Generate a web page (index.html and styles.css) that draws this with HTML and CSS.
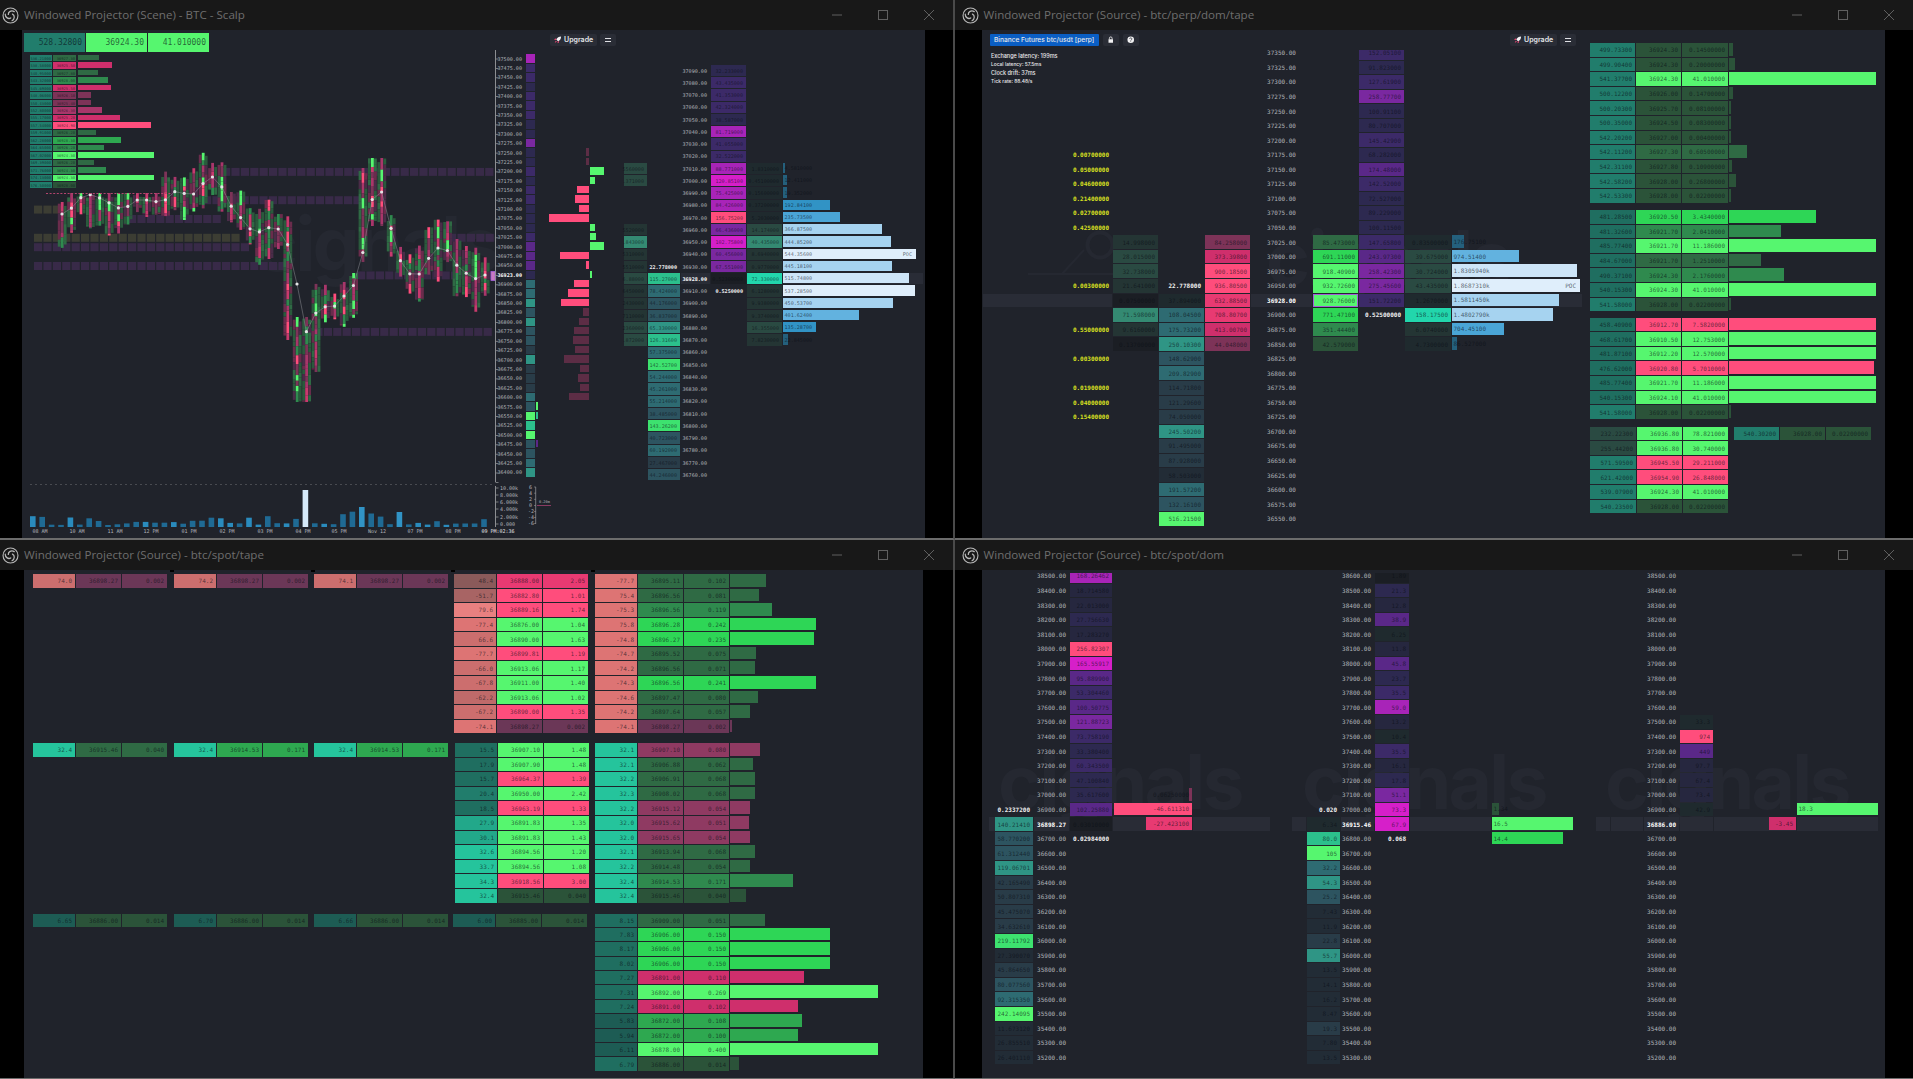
FILE: index.html
```html
<!DOCTYPE html>
<html lang="en">
<head>
<meta charset="utf-8">
<title>Windowed Projectors</title>
<link rel="stylesheet" href="styles.css">
</head>
<body>
<svg class="defs" width="0" height="0" aria-hidden="true">
  <symbol id="obs" viewBox="-10 -10 20 20">
    <circle r="8.8" fill="none" stroke="currentColor" stroke-width="1.3"/>
    <g fill="none" stroke="currentColor" stroke-width="1.5" stroke-linecap="round">
      <path id="blade" d="M-2.6 -1.2C-2.8 -4.4 1 -6.6 4.4 -4.6"/>
      <path d="M-2.6 -1.2C-2.8 -4.4 1 -6.6 4.4 -4.6" transform="rotate(120)"/>
      <path d="M-2.6 -1.2C-2.8 -4.4 1 -6.6 4.4 -4.6" transform="rotate(240)"/>
    </g>
  </symbol>
  <symbol id="ctl-min" viewBox="0 0 10 10"><path d="M0 5H10" stroke="currentColor" stroke-width="1"/></symbol>
  <symbol id="ctl-max" viewBox="0 0 10 10"><rect x=".5" y=".5" width="9" height="9" fill="none" stroke="currentColor" stroke-width="1"/></symbol>
  <symbol id="ctl-close" viewBox="0 0 10 10"><path d="M0 0L10 10M10 0L0 10" stroke="currentColor" stroke-width="1"/></symbol>
  <symbol id="rocket" viewBox="0 0 10 10"><path d="M9.5 .5C6.5 .6 4.4 2 3 4.6L5.4 7C8 5.6 9.4 3.5 9.5 .5Z" fill="#f4f4f6"/><path d="M3.2 3.2L1 3.8 .5 5.2 2.8 5ZM6.8 6.8L6.2 9 4.8 9.5 5 7.2ZM2.4 6.2L3.8 7.6 1 9Z" fill="#ff4d7c"/></symbol>
  <symbol id="lock" viewBox="0 0 10 10"><path d="M2 4.4H8V9H2Z" fill="#f0f0f2"/><path d="M3.2 4.4V3A1.8 1.8 0 0 1 6.8 3V4.4" fill="none" stroke="#f0f0f2" stroke-width="1.1"/></symbol>
  <symbol id="help" viewBox="0 0 10 10"><circle cx="5" cy="5" r="4.4" fill="#f0f0f2"/><path d="M3.5 3.9A1.5 1.4 0 1 1 5.6 5.2C5.1 5.5 5 5.7 5 6.2" fill="none" stroke="#2a2d36" stroke-width="1"/><circle cx="5" cy="7.5" r=".6" fill="#2a2d36"/></symbol>
</svg>
<main class="desk">
  <section class="win win-tl">
    <header class="titlebar">
      <svg class="obs"><use href="#obs"/></svg>
      <span class="title">Windowed Projector (Scene) - BTC - Scalp</span>
      <div class="ctls"><svg><use href="#ctl-min"/></svg><svg><use href="#ctl-max"/></svg><svg><use href="#ctl-close"/></svg></div>
    </header>
    <div class="well well-a">
      <div class="canvas" id="c1">
        <span class="mark mark-1">cignals</span>
        <div class="tools tools-1">
          <button class="btn"><svg class="ic"><use href="#rocket"/></svg>Upgrade</button>
          <button class="btn btn-sq"><span class="burger"></span></button>
        </div>
      </div>
    </div>
  </section>
  <section class="win win-tr">
    <header class="titlebar">
      <svg class="obs"><use href="#obs"/></svg>
      <span class="title">Windowed Projector (Source) - btc/perp/dom/tape</span>
      <div class="ctls"><svg><use href="#ctl-min"/></svg><svg><use href="#ctl-max"/></svg><svg><use href="#ctl-close"/></svg></div>
    </header>
    <div class="well well-b">
      <div class="canvas" id="c2">
        <svg class="person" viewBox="0 0 100 60"><circle cx="72" cy="15" r="12.5"/><path d="M34 44L56 20M0 44H92"/></svg>
        <span class="mark mark-2">cignals</span>
        <div class="tools tools-2">
          <button class="btn btn-blue">Binance Futures btc/usdt [perp]</button>
          <button class="btn btn-sq"><svg class="ic"><use href="#lock"/></svg></button>
          <button class="btn btn-sq"><svg class="ic"><use href="#help"/></svg></button>
        </div>
        <div class="tools tools-3">
          <button class="btn"><svg class="ic"><use href="#rocket"/></svg>Upgrade</button>
          <button class="btn btn-sq"><span class="burger"></span></button>
        </div>
        <div class="info">
          <p class="big">Exchange latency: 199ms</p>
          <p>Local latency: 57.5ms</p>
          <p class="big">Clock drift: 37ms</p>
          <p>Tick rate: 88.48/s</p>
        </div>
      </div>
    </div>
  </section>
  <section class="win win-bl">
    <header class="titlebar">
      <svg class="obs"><use href="#obs"/></svg>
      <span class="title">Windowed Projector (Source) - btc/spot/tape</span>
      <div class="ctls"><svg><use href="#ctl-min"/></svg><svg><use href="#ctl-max"/></svg><svg><use href="#ctl-close"/></svg></div>
    </header>
    <div class="well well-c"><div class="canvas" id="c3"></div></div>
  </section>
  <section class="win win-br">
    <header class="titlebar">
      <svg class="obs"><use href="#obs"/></svg>
      <span class="title">Windowed Projector (Source) - btc/spot/dom</span>
      <div class="ctls"><svg><use href="#ctl-min"/></svg><svg><use href="#ctl-max"/></svg><svg><use href="#ctl-close"/></svg></div>
    </header>
    <div class="well well-b">
      <div class="canvas" id="c4">
        <span class="mark mark-41">cignals</span>
        <span class="mark mark-42">cignals</span>
        <span class="mark mark-43">cignals</span>
      </div>
    </div>
  </section>
</main>
<script src="app.js"></script>
</body>
</html>
```
FILE: styles.css
```css
* { box-sizing: border-box; }
html, body { margin: 0; height: 100%; background: #000; overflow: hidden; }
.defs { position: absolute; }
.desk {
  width: 1913px; height: 1079px;
  display: grid;
  grid-template-columns: 955px 958px;
  grid-template-rows: 540px 539px;
}
.win { display: flex; flex-direction: column; border-bottom: 2px solid #6c6c6c; min-height: 0; }
.win-tl, .win-bl { border-right: 2px solid #4a4a4a; }
.win-bl, .win-br { border-bottom-width: 1px; }
.titlebar {
  height: 30px; flex: none; background: #181818;
  display: flex; align-items: center; color: #6a6a6a;
}
.obs { width: 17px; height: 17px; margin-left: 1.5px; color: #b8b8b8; flex: none; }
.win-tr .obs, .win-br .obs { margin-left: 6.5px; }
.title { margin-left: 5.5px; font: 11.6px/30px "Open Sans", "Noto Sans", sans-serif; color: #6e6e6e; white-space: nowrap; }
.win-tr .title, .win-br .title { margin-left: 5px; }
.ctls { margin-left: auto; display: flex; color: #5f5f5f; padding-right: 1px; }
.ctls svg { width: 46px; height: 10px; }
.well { flex: 1; background: #000; display: flex; min-height: 0; }
.well-a { padding: 0 28px 0 22px; }
.well-b { padding: 0 28px 0 27px; }
.well-c { padding: 0 30px 0 24px; }
.canvas { flex: 1; position: relative; overflow: hidden; background: #20232b; }

.mark { position: absolute; font: 700 75px/1 Inter, "Open Sans", sans-serif; letter-spacing: -3px; color: #252831; white-space: nowrap; }
.mark-1 { left: 232px; top: 176px; }
.mark-2 { left: 284px; top: 190px; }
.mark-41 { left: 16px; top: 174px; }
.mark-42 { left: 320px; top: 174px; }
.mark-43 { left: 623px; top: 174px; }
.person { position: absolute; left: 46px; top: 200px; width: 100px; height: 60px; fill: none; stroke: #252831; stroke-width: 4; }
.person path { stroke-width: 2; }

.tools { position: absolute; display: flex; gap: 3px; top: 4px; }
.tools-1 { left: 528px; }
.tools-2 { left: 8px; gap: 4px; }
.tools-3 { left: 528px; }
.btn {
  height: 12px; padding: 0 4px; border: 0; border-radius: 2px;
  background: #2a2d36; color: #e6e7ea;
  font: 600 7px/12px Inter, sans-serif;
  display: flex; align-items: center; gap: 2.5px; white-space: nowrap;
}
.btn-sq { width: 16px; padding: 0; justify-content: center; font-size: 6px; }
.btn-blue { background: #0a5ec4; width: 109px; padding: 0 4px; border-radius: 1px; font-weight: 500; font-size: 6.6px; }
.ic { width: 7.5px; height: 7.5px; }
.burger { width: 6px; height: 4px; border-top: 1px solid #dfe0e4; border-bottom: 1px solid #dfe0e4; }
.info { position: absolute; left: 9px; top: 21.5px; color: #e8e8ea; font: 500 4.9px/8.5px Inter, sans-serif; }
.info p { margin: 0; white-space: nowrap; }
.info .big { font-size: 5.5px; }

.chart { position: absolute; left: 0; top: 0; width: 903px; height: 508px; }
.ax { font: 5px "DejaVu Sans Mono", monospace; fill: #b4b6bb; }
.ax-b { fill: #e8e8e8; }
.ax-s { font-size: 3.6px; }

.ladder { position: absolute; display: grid; column-gap: 1px; font-family: "DejaVu Sans Mono", "Liberation Mono", monospace; font-size: 6px; }
.fs5 { font-size: 5.1px; }
.fs4 { font-size: 3.8px; }
.fs8 { font-size: 8px; }
.cell {
  margin-bottom: 1px; padding: 0 3px; min-width: 0;
  display: flex; align-items: center; justify-content: flex-end;
  color: rgba(10, 14, 22, .64); white-space: nowrap;
}
.fs4 .cell { padding: 0 1px; }
.barcell { padding: 0; justify-content: flex-start; align-items: flex-start; }
.barcell.end { justify-content: flex-end; }
.bar { position: relative; height: calc(100% - 1px); display: flex; align-items: center; flex: none; padding-left: 1.5px; gap: 4px; }
.end .bar { justify-content: flex-end; padding: 0 3px 0 0; }
.bar .poc { position: absolute; right: 4px; }
.pc { justify-content: center; }
.hl { background: #292c36; }
.px { color: #b1b3b9; }
.pb { color: #fff; font-weight: 700; }
.w { color: #f0f0f0; font-weight: 700; }
.y { color: #d9e021; font-weight: 700; }
.tk { position: absolute; top: 0; width: 4px; height: 2px; background: #000; }

.p0 { background: #26273f; } .p1 { background: #2d2950; } .p2 { background: #3c2a68; }
.p3 { background: #5a2888; } .p4 { background: #7a28a0; } .p5 { background: #a824b8; } .p6 { background: #d61fc9; }
.t0 { background: #222c36; } .t1 { background: #293c48; } .t2 { background: #2d5460; } .t3 { background: #2e6b72; }
.t4 { background: #2f9585; } .t5 { background: #2cc08c; } .t6 { background: #3de26f; } .t7 { background: #22d6ac; }
.g1 { background: #2b5339; } .g2 { background: #2f6a44; } .g3 { background: #2f8a4e; } .g4 { background: #2ea850; }
.g5 { background: #2ed656; } .g6 { background: #56f66f; }
.g6o { background: #56f66f; box-shadow: inset 0 0 0 1px #a060d8; }
.r1 { background: #5c2d45; } .r2 { background: #7d3358; } .r3 { background: #a8366a; } .r4 { background: #cf2f6c; }
.r5 { background: #e83a72; } .r6 { background: #ff4d7c; }
.b1 { background: #24607d; } .b2 { background: #3193c5; } .b3 { background: #4aa5d6; } .b4 { background: #62b2df; }
.b5 { background: #a6d3f0; } .b6 { background: #cde5f8; } .b7 { background: #dfeefb; }
.tt0 { background: #1d5c54; } .tt1 { background: #1f6e60; } .tt2 { background: #217d6c; } .tt25 { background: #22a88a; } .tt3 { background: #25c49c; }
.e0 { background: #1b1e24; } .e1 { background: #1f2a2e; } .e2 { background: #243534; } .e3 { background: #2a4a42; } .e4 { background: #348a72; }
.c1 { background: #8a5a5a; } .c2 { background: #a86464; } .c3 { background: #bf6a6a; } .c4 { background: #cc6e6e; } .c5 { background: #dd7474; } .c6 { background: #e88080; }
.pl1 { background: #6b3757; } .pl2 { background: #8f3a62; }
```
FILE: app.js
```js
const ORIGIN = { c1: [22, 30], c2: [982, 30], c3: [24, 570], c4: [982, 570] };

function ladder(id, o) {
  const [ox, oy] = ORIGIN[id];
  const el = document.createElement('div');
  el.className = 'ladder ' + (o.cls || '');
  el.style.left = o.x - ox + 'px';
  el.style.top = o.y - oy + 'px';
  el.style.gridTemplateColumns = o.cols.map(c => c + 'px').join(' ');
  el.style.gridAutoRows = o.rh + 'px';
  if (o.clip) el.style.clipPath = `inset(${o.clip}px 0 0 0)`;
  o.rows.forEach((row, r) => {
    o.cols.forEach((_, c) => {
      const [t = '', k = '', w = '', a = ''] = (row[c] || '').split('|');
      const cell = document.createElement('div');
      cell.className = 'cell';
      if (r === o.hl) cell.classList.add('hl');
      if (w !== '') {
        cell.classList.add('barcell');
        if (a) cell.classList.add('end');
        const bar = document.createElement('div');
        bar.className = 'bar ' + k;
        bar.style.width = w + 'px';
        const [main, poc] = t.split('~');
        if (main) { const s = document.createElement('span'); s.textContent = main; bar.append(s); }
        if (poc) { const s = document.createElement('span'); s.className = 'poc'; s.textContent = poc; bar.append(s); }
        cell.append(bar);
      } else {
        if (k) k.split(' ').forEach(n => cell.classList.add(n));
        if (t) cell.textContent = t;
      }
      el.append(cell);
    });
  });
  document.getElementById(id).append(el);
}

/* column helpers: "text|class text|class" from a starting row */
const col = (start, str) => {
  const m = {};
  str.trim().split(/\s+/).forEach((s, i) => { if (s !== '.') m[start + i] = s; });
  return m;
};
const merge = (...ms) => Object.assign({}, ...ms);
const sparse = (n, cols) => Array.from({ length: n }, (_, r) => cols.map(c => c[r] || ''));
const priceCol = (start, step, n, cls, special) => {
  const m = {};
  for (let i = 0; i < n; i++) m[i] = (start + step * i).toFixed(2) + '|' + cls;
  return Object.assign(m, special || {});
};
/* tape row: value class price size class barWidth */
const T = (s, bar = true) => {
  const [a, k1, b, c, k, w] = s.trim().split(/\s+/);
  const r = [`${a}|${k1}`, `${b}|${k}`, `${c}|${k}`];
  if (bar) r.push(`|${k}|${w}`);
  return r;
};
const tapeRows = (str, bar = true) => str.trim().split('\n').map(s => T(s, bar));

/* ---------- window 1: chart ---------- */
function buildChart() {
  let seed = 7;
  const R = () => (seed = (seed * 16807) % 2147483647) / 2147483647;
  const pick = a => a[Math.floor(R() * a.length)];
  const keys = [[62,214],[68,213],[77,200],[87,194],[96,196],[115,206],[124,211],[133,200],[152,200],[162,204],[171,193],[180,190],[190,198],[199,188],[209,177],[218,177],[228,203],[237,212],[246,226],[256,233],[265,230],[275,224],[284,238],[294,256],[303,340],[312,318],[322,305],[331,310],[340,300],[350,290],[359,278],[369,211],[378,179],[388,215],[397,255],[406,270],[416,280],[425,263],[435,250],[444,244],[454,263],[463,270],[473,280],[482,275],[492,275]];
  const yAt = x => {
    for (let i = 1; i < keys.length; i++) if (x <= keys[i][0]) {
      const [x0, y0] = keys[i - 1], [x1, y1] = keys[i];
      return y0 + (y1 - y0) * (x - x0) / (x1 - x0);
    }
    return 275;
  };
  const rect = (x, y, w, h, c) => `<rect x="${x.toFixed(1)}" y="${y.toFixed(1)}" width="${w.toFixed(1)}" height="${h.toFixed(1)}" fill="${c}"/>`;
  let h = '';
  const PU = '#382a48', OL = '#3c3d33';
  [[12,222,494,PU],[15,203,360,PU],[16,34,62,OL],[17,128,222,PU],[19,34,240,OL],[19,448,494,PU],[20,34,250,PU],[22,34,288,PU],[23,357,494,PU],[29,305,494,PU]].forEach(([i, a, b, c]) => {
    for (let x = a; x < b - 4; x += 9.4) h += rect(x, 59 + i * 9.41 - 4, 8.2, 8, c);
  });
  const side = ['#2a5a3c', '#2f6a44', '#2a5a3c', '#6a2c4c', '#4a2c48', '#2a5a3c'];
  const mid = ['#c83a6e', '#ff4d7c', '#56f66f', '#a8366a', '#2f8a4e', '#7d3358', '#a8366a'];
  const pts = [];
  for (let x = 62; x < 492; x += 9.4) {
    const y = yAt(x);
    let top = y - 12 - R() * 20, bot = y + 10 + R() * 26;
    if (x < 160) top = Math.max(top, 193);
    if (x > 296 && x < 310) { top = 317; bot = 402; }
    if (x > 285 && x < 296) bot = 340;
    if (x > 310 && x < 325) bot = 372;
    if (x > 372 && x < 384) { top = 158; bot = 226; }
    if (x > 362 && x < 372) { top = 168; bot = 262; }
    [[-4.2, side, 1], [-1.2, mid, 0], [1.8, side, 1]].forEach(([dx, pal, inset]) => {
      let yy = top + inset * R() * 6;
      const end = bot - inset * R() * 6;
      while (yy < end) {
        const seg = Math.min(4 + R() * 8, end - yy);
        h += rect(x + dx, yy, 2.8, seg, pick(pal));
        yy += seg;
      }
    });
    pts.push([x, y]);
  }
  h += `<polyline points="${pts.map(p => p.map(v => v.toFixed(1)).join(',')).join(' ')}" fill="none" stroke="#8f9196" stroke-width=".5"/>`;
  pts.forEach(([x, y]) => { h += `<circle cx="${x.toFixed(1)}" cy="${y.toFixed(1)}" r="1.6" fill="#e4e4e6"/>`; });
  for (let x = 46; x < 170; x += 3.6) h += rect(x, 193, 2, 1, '#b4446e');
  h += `<rect x="491" y="271.5" width="4" height="9" fill="#c87ac0" stroke="#a060d8" stroke-width=".8"/>`;

  /* volume bars */
  for (let i = 0, x = 30; x < 490; i++, x += 9.4) {
    let v = 2 + R() * R() * 15;
    let c = R() > .7 ? '#2a8bbd' : '#1f6a94';
    if (x > 298 && x < 308) { v = 37; c = '#d5e9f9'; }
    if (x > 355 && x < 365) { v = 20; c = '#3193c5'; }
    if (x > 390 && x < 400) { v = 15; c = '#3193c5'; }
    h += rect(x, 527 - v, 5.6, v, c);
  }
  /* axes */
  h += `<path d="M495.5 50V482M495.5 486V527" stroke="#8c8e92" stroke-width="1" fill="none"/>`;
  for (let i = 0; i < 46; i++) h += rect(495.5, 59 + i * 9.41 - .4, 3, .8, '#8c8e92');
  h += `<path d="M30 484.5H495" stroke="#5a5c60" stroke-dasharray="2 3" stroke-width=".7"/>`;
  [['10.00k', 488], ['8.000k', 495], ['6.000k', 502], ['4.000k', 509], ['2.000k', 517], ['0.000', 524]].forEach(([t, y]) => {
    h += `<text class="ax" x="500" y="${y + 2}">${t}</text>` + rect(495.5, y - .4, 3, .8, '#8c8e92');
  });
  [['08 AM', 40], ['10 AM', 77], ['11 AM', 115], ['12 PM', 151], ['01 PM', 189], ['02 PM', 227], ['03 PM', 265], ['04 PM', 303], ['05 PM', 339], ['Nov 12', 377], ['07 PM', 415], ['08 PM', 453]].forEach(([t, x]) => {
    h += `<text class="ax" text-anchor="middle" x="${x}" y="532.5">${t}</text>`;
  });
  h += `<text class="ax ax-b" text-anchor="middle" x="498" y="532.5">09 PM:02:36</text>`;
  ['6', '4', '2', '0', '-2', '-4', '-6'].forEach((t, i) => {
    h += `<text class="ax" x="${t[0] === '-' ? 528 : 529}" y="${488.5 + i * 6.1}">${t}</text>` + rect(534, 487 + i * 6.1 - .3, 2, .6, '#8c8e92');
  });
  h += `<path d="M535.7 487V524" stroke="#8c8e92" stroke-width=".8"/><path d="M537 505.5H551" stroke="#8a3a62" stroke-width="1"/>`;
  h += `<text class="ax ax-s" x="539" y="503">0.20m</text>`;

  const svg = document.createElementNS('http://www.w3.org/2000/svg', 'svg');
  svg.setAttribute('class', 'chart');
  svg.setAttribute('viewBox', '22 30 903 508');
  svg.innerHTML = h;
  const host = document.getElementById('c1');
  host.insertBefore(svg, host.querySelector('.tools'));
}
buildChart();

/* ---------- window 1: panels ---------- */
ladder('c1', { x: 24, y: 33, rh: 20, cols: [61, 61, 61], cls: 'fs8', rows: [['528.32800|tt2', '36924.30|g6', '41.010000|g6']] });

const tiny = [['g2',21,'36927.30'],['r4',34,'36925.50'],['g2',20,'36927.80'],['g3',30,'36928.00'],['r4',33,'36925.50'],['r2',13,'36926.10'],['r2',13,'36925.40'],['r3',24,'36926.30'],['r4',42,'36925.20'],['r6',73,'36924.90'],['g2',18,'36926.20'],['g4',43,'36928.30'],['g3',26,'36926.20'],['g6',76,'36924.30'],['g2',16,'36926.20'],['g3',28,'36924.30'],['g6',76,'36924.30'],['g1',0,'36928.00']];
ladder('c1', { x: 30, y: 55, rh: 7.47, cols: [22, 23, 80], cls: 'fs4',
  rows: tiny.map(([k, w, p], i) => [`${(536.21 + i * 2.37).toFixed(5)}|tt2`, `${p}|${k}`, w ? `|${k}|${w}` : '']) });

/* price axis, volume profile and delta bars */
const axisKinds = 'p5 p2 p2 p1 p2 p2 p2 p1 p1 p4 p1 p1 p2 p1 p2 p2 p1 p1 p1 p2 p3 p3 p3 p1 t3 t3 t4 t2 t4 t2 t2 t1 t4 t1 t1 t1 t3 t2 g6 t5 g6 t2 t2 t3 t4'.split(' ');
const delta = { 10: -2, 11: -.6, 12: 14, 13: 5, 14: -12, 15: -14, 16: -10, 17: -40, 18: 5, 19: 6, 20: 14, 21: -29, 22: -3, 23: 2, 24: -15, 25: -21, 26: -28, 27: -6, 28: -10, 29: -15, 30: -16, 31: -14, 32: -25, 33: -9, 34: -11, 35: -9, 36: -20 };
ladder('c1', { x: 499, y: 54.3, rh: 9.41, cols: [26, 9, 6, 46, 30], cls: 'fs5',
  rows: axisKinds.map((k, i) => {
    const v = delta[i];
    const dark = i >= 27 || i === 10 || i === 11;
    return [
      i === 23 ? '36923.00|pb' : (37500 - 25 * i).toFixed(2) + '|px',
      '|' + k,
      i === 37 ? '|g6|2' : i === 38 ? '|t5|2' : i === 41 ? '|p3|2' : '',
      v < 0 ? `|${dark ? 'r1' : 'r6'}|${-v}|e` : '',
      v > 0 ? `|g6|${v}` : ''
    ];
  }) });

const purple1 = col(0, '32.233000|p1 43.435000|p2 41.353000|p2 42.324000|p2 38.587000|p1 81.719000|p5 41.055000|p2 32.522000|p2 88.771000|p5 120.85100|p6 75.425000|p5 84.426000|p5 156.75200|r6 66.436000|p4 102.75800|p6 60.456000|p4 67.551000|p4 0.52300000|e0');
const bars1 = merge(col(8, '4.5810000|b1|2 12.411000|b1|4 19.352000|b1|4 192.84100|b2|47 235.73500|b3|57 366.87500|b5|99 444.85200|b5|108 544.35600~POC|b7|133 445.18100|b5|109 515.74800|b6|126 537.28500|b7|132 450.53700|b5|110 401.62400|b4|76 135.28700|b2|33 22.845000|b1|5'));
ladder('c1', { x: 624, y: 64.9, rh: 12.25, cols: [23, 32, 29, 35, 35, 140], cls: 'fs5', hl: 17,
  rows: sparse(34, [
    merge(col(8, '5560000|e3 .371000|e3'), col(13, '5520000|e2 .843000|e4 5310000|e2 5510000|e2 6.88000|e3 6450000|e2 2430000|e2 7110000|e2 2360000|e3 .872000|e3')),
    merge({ 16: '22.778000|w' }, col(17, '115.27000|t5 78.424000|t3 44.176000|t2 36.837000|t2 65.330000|t4 126.31600|t5 57.375000|t3 142.52700|t6 54.244000|t3 45.261000|t3 55.214000|t3 38.485000|t2 143.26200|t6 40.723000|t2 60.192000|t3 27.467000|t1 44.246000|t2')),
    priceCol(37090, -10, 34, 'px', { 17: '36928.00|pb' }),
    merge(purple1, { 18: '0.5250000|w' }),
    col(8, '1.8310000|e1 0.45100000|e1 0.15600000|e1 0.37200000|e1 5.2030000|e1 14.174000|e3 40.435000|e4 8.6940000|e2 0.9770000|e2 72.330000|t7 6.1280000|e2 9.9380000|e2 9.3740000|e2 16.355000|e3 7.8230000|e2'),
    bars1
  ]) });

/* ---------- window 2 ---------- */
const r2 = { x: 983, y: 46, rh: 14.57, clip: 4, hl: 17 };
ladder('c2', { ...r2, cols: [129, 45, 45, 45, 61, 45, 45, 46, 130],
  rows: sparse(33, [
    merge(col(7, '0.00700000|y 0.05000000|y 0.04600000|y 0.21400000|y 0.02700000|y 0.42500000|y'), { 16: '0.00300000|y', 19: '0.55000000|y', 21: '0.00300000|y', 23: '0.01900000|y', 24: '0.04000000|y', 25: '0.15400000|y' }),
    col(13, '14.998000|e2 28.015000|e3 32.738000|e3 21.641000|e2 0.07500000|e0 71.598000|e4 9.6160000|e2 0.13700000|e0'),
    merge({ 16: '22.778000|w' }, col(17, '37.894000|e1 108.04500|t3 175.73200|t3 250.10300|t4 148.62900|t2 209.82900|t3 114.71800|t1 121.29600|t1 74.050000|t1 245.50200|t4 91.495000|t1 87.928000|t1 58.503000|t0 191.57200|t3 132.16100|t2 516.21500|g6 302.32500|t4')),
    col(13, '84.258000|r2 373.39800|r4 900.18500|r6 936.80500|r6 632.88500|r5 708.80700|r5 413.00700|r4 44.048000|r2'),
    Object.fromEntries(Array.from({ length: 33 }, (_, i) => [i, (i === 17 ? '36928.00|pb pc' : (37350 - 25 * i).toFixed(2) + '|px pc')])),
    col(13, '85.473000|g2 691.11000|g5 918.40900|g6 932.72600|g6 928.76000|g6o 771.47100|g5 351.44400|g3 42.579000|g1'),
    merge(col(0, '152.05100|p2 91.823000|p1 127.61900|p2 258.77700|p4 100.91100|p1 80.707000|p1 145.42900|p2 68.282000|p1 174.48000|p3 142.52000|p2 72.527000|p1 89.229000|p1 100.11500|p1 147.65800|p2 243.97300|p3 258.42300|p4 275.45600|p4 151.72200|p2'), { 18: '0.52500000|w' }),
    col(13, '0.83500000|e1 39.675000|e3 30.724000|e3 43.435000|e3 1.2670000|e1 158.17500|t7 6.0740000|e2 4.7300000|e1'),
    col(13, '176.75100|b1|12 974.51400|b4|67 1.8305940k|b6|125 1.8687310k~POC|b7|128 1.5811450k|b5|107 1.4802790k|b5|101 704.45100|b3|52 86.527000|b1|5')
  ]) });

const tape2 = { cols: [45, 45, 46, 150], rh: 14.6 };
ladder('c2', { ...tape2, x: 1590, y: 43, rows: tapeRows(`
499.73300 tt2 36924.30 0.14500000 g1 4
499.90400 tt2 36924.30 0.20000000 g1 6
541.37700 tt2 36924.30 41.010000 g6 147
500.12200 tt2 36926.00 0.14700000 g1 4
500.20300 tt2 36925.70 0.08100000 g1 2
500.35000 tt2 36924.50 0.08300000 g1 2
542.20200 tt2 36927.00 0.00400000 g1 2
542.11200 tt2 36927.30 0.60500000 g2 18
542.31100 tt2 36927.80 0.10900000 g1 3
542.58200 tt2 36928.00 0.26800000 g1 7
542.53300 tt2 36928.00 0.02200000 g1 1`) });
ladder('c2', { ...tape2, x: 1590, y: 210, rows: tapeRows(`
481.28500 tt1 36920.50 3.4340000 g5 87
481.32600 tt1 36921.70 2.0410000 g3 52
485.77400 tt1 36921.70 11.186000 g6 147
484.67000 tt1 36921.70 1.2510000 g2 32
490.37100 tt1 36924.30 2.1760000 g3 55
540.15300 tt1 36924.30 41.010000 g6 147
541.58000 tt2 36928.00 0.02200000 g1 1`) });
ladder('c2', { ...tape2, x: 1590, y: 317.7, rows: tapeRows(`
458.40900 tt1 36912.70 7.5820000 r6 147
468.61700 tt1 36910.50 12.753000 g6 147
481.87100 tt1 36912.20 12.570000 g6 147
476.62000 tt1 36920.80 5.7010000 r6 145
485.77400 tt1 36921.70 11.186000 g6 147
540.15300 tt1 36924.10 41.010000 g6 147
541.58000 tt2 36928.00 0.02200000 g1 1`) });
ladder('c2', { cols: [46, 45, 45], rh: 14.6, x: 1590, y: 426.7, rows: tapeRows(`
232.22300 e3 36936.80 78.821000 g6 0
255.44200 e3 36936.80 30.740000 g6 0
571.59500 tt2 36945.50 29.211000 r6 0
621.42000 tt2 36954.90 26.848000 r6 0
539.07900 tt2 36924.30 41.010000 g6 0
540.23500 tt2 36928.00 0.02200000 g1 0`, false) });
ladder('c2', { cols: [45, 45, 45], rh: 14.6, x: 1734, y: 426.7, rows: tapeRows(`540.30200 tt2 36928.00 0.02200000 g1 0`, false) });

/* ---------- window 3 ---------- */
[170, 311, 451, 591].forEach(x => {
  const t = document.createElement('span');
  t.className = 'tk';
  t.style.left = x - 24 + 'px';
  document.getElementById('c3').append(t);
});
const w3 = [42, 45, 45], w3b = [42, 45, 45, 150];
[[33, '74.0', 'c4'], [174, '74.2', 'c4'], [314, '74.1', 'c4']].forEach(([x, v, k]) =>
  ladder('c3', { x, y: 574, rh: 14.57, cols: w3, rows: tapeRows(`${v} ${k} 36898.27 0.002 pl1 0`, false) }));
[[33, '36915.46', '0.040', 'g2'], [174, '36914.53', '0.171', 'g4'], [314, '36914.53', '0.171', 'g4']].forEach(([x, p, s, k]) =>
  ladder('c3', { x, y: 743, rh: 14.6, cols: w3, rows: tapeRows(`32.4 tt3 ${p} ${s} ${k} 0`, false) }));
[[33, '6.65', '36886.00'], [174, '6.70', '36886.00'], [314, '6.66', '36886.00'], [453, '6.00', '36885.00']].forEach(([x, v, p]) =>
  ladder('c3', { x, y: 913.5, rh: 14.4, cols: w3, rows: tapeRows(`${v} tt0 ${p} 0.014 g1 0`, false) }));

ladder('c3', { x: 454, y: 574, rh: 14.57, cols: w3, rows: tapeRows(`
48.4 c1 36888.00 2.05 r5 0
-51.7 c2 36882.80 1.01 r6 0
79.6 c6 36889.16 1.74 r6 0
-77.4 c5 36876.00 1.04 g6 0
66.6 c4 36890.00 1.63 g6 0
-77.7 c5 36899.81 1.19 r6 0
-66.0 c4 36913.06 1.17 g6 0
-67.8 c4 36911.00 1.40 g6 0
-62.2 c3 36913.06 1.02 g6 0
-67.2 c4 36890.00 1.35 r6 0
-74.1 c5 36898.27 0.002 pl1 0`, false) });
ladder('c3', { x: 595, y: 574, rh: 14.57, cols: w3b, rows: tapeRows(`
-77.7 c5 36895.11 0.102 g2 36
75.4 c5 36896.56 0.081 g2 29
-75.3 c5 36896.56 0.119 g3 42
75.8 c5 36896.28 0.242 g5 86
-74.8 c5 36896.27 0.235 g5 84
-74.7 c5 36895.52 0.075 g2 26
-74.2 c5 36896.56 0.071 g2 25
-74.3 c5 36896.56 0.241 g5 86
-74.6 c5 36897.47 0.080 g2 28
-74.2 c5 36897.64 0.057 g2 20
-74.1 c5 36898.27 0.002 pl1 2`) });
ladder('c3', { x: 455, y: 743, rh: 14.6, cols: w3, rows: tapeRows(`
15.5 tt1 36907.10 1.48 g6 0
17.9 tt1 36907.90 1.48 g6 0
15.7 tt1 36964.37 1.39 r6 0
20.4 tt2 36950.00 2.42 g6 0
18.5 tt1 36963.19 1.33 r6 0
27.9 tt25 36891.83 1.35 g6 0
30.1 tt25 36891.83 1.43 g6 0
32.6 tt3 36894.56 1.20 g6 0
33.7 tt3 36894.56 1.08 g6 0
34.3 tt3 36918.56 3.00 r6 0
32.4 tt3 36915.46 0.040 g1 0`, false) });
ladder('c3', { x: 595, y: 743, rh: 14.6, cols: w3b, rows: tapeRows(`
32.1 tt3 36907.10 0.080 pl2 30
32.1 tt3 36906.88 0.062 g2 23
32.2 tt3 36906.91 0.068 g2 25
32.3 tt3 36908.02 0.068 g2 25
32.2 tt3 36915.12 0.054 pl2 20
32.0 tt3 36915.62 0.051 pl2 19
32.0 tt3 36915.65 0.054 pl2 20
32.1 tt3 36913.94 0.068 g2 25
32.2 tt3 36914.48 0.054 g2 20
32.4 tt3 36914.53 0.171 g3 63
32.4 tt3 36915.46 0.040 g1 16`) });
ladder('c3', { x: 595, y: 913.5, rh: 14.4, cols: w3b, rows: tapeRows(`
8.15 tt1 36909.00 0.051 g2 35
7.83 tt1 36906.00 0.150 g5 100
8.17 tt1 36906.00 0.150 g5 100
8.02 tt1 36906.00 0.150 g5 100
7.27 tt1 36891.00 0.110 r4 74
7.31 tt1 36892.00 0.269 g6 148
7.24 tt1 36891.00 0.102 r4 68
5.83 tt0 36872.00 0.108 g4 72
5.94 tt0 36872.00 0.100 g4 68
6.11 tt0 36878.00 0.400 g6 148
6.79 tt1 36886.00 0.014 g1 9`) });

/* ---------- window 4 ---------- */
const w4 = { y: 569.1, rh: 14.6, clip: 4, hl: 17 };
ladder('c4', { ...w4, x: 989, cols: [5, 38, 35, 42, 79, 77],
  rows: sparse(34, [
    {},
    merge({ 16: '0.2337200|w' }, col(17, '140.21410|t4 58.770200|t2 61.312440|t2 119.06701|t4 42.165490|t1 50.807310|t1 45.475070|t1 34.632610|t1 219.11792|t6 27.390070|t0 45.864650|t1 80.077560|t2 92.315350|t3 242.14095|g6 11.673120|t0 26.855510|t0 26.401110|t0')),
    priceCol(38500, -100, 34, 'px', { 17: '36898.27|pb' }),
    merge(col(0, '168.26462|p5 18.714580|p0 22.013000|p0 27.756630|p1 17.283270|p0 256.82307|r6 165.55917|p6 95.889900|p3 53.304460|p2 100.50775|p3 121.88723|p4 73.758190|p2 33.380400|p1 60.343500|p2 47.100840|p1 35.617600|p1 102.25880|p3 0.03010000|e0'), { 18: '0.02984000|w' }),
    { 15: '0.06250000|r2|1|e', 16: '-46.611310|r6|78|e', 17: '-27.423100|r5|46|e' },
    {}
  ]) });
ladder('c4', { ...w4, x: 1292, cols: [14, 33, 33, 34, 81, 81],
  rows: sparse(34, [
    {},
    merge({ 16: '0.020|w' }, col(17, '6.34|e1 80.0|t5 105|g6 32.2|t3 54.3|t4 25.2|t2 7.43|t0 11.9|t0 22.8|t1 55.7|t4 13.5|t0 14.1|t0 16.2|t0 8.47|t0 19.3|t1 7.80|t0 13.5|t0')),
    priceCol(38600, -100, 34, 'px', { 17: '36915.46|pb', 18: '36800.00|px' }),
    merge(col(0, '1.89|e0 21.3|p1 12.8|p0 38.9|p3 6.25|e1 11.8|p0 45.8|p3 23.7|p1 35.5|p2 59.0|p5 13.2|p0 10.4|e1 35.5|p2 16.1|p0 17.8|p1 51.1|p4 73.3|p6 67.9|p6'), { 18: '0.068|w' }),
    {},
    { 16: '1.34|g1|7', 17: '16.5|g6|81', 18: '14.4|g5|71' }
  ]) });
ladder('c4', { ...w4, x: 1596, cols: [14, 32, 35, 33, 82, 81],
  rows: sparse(34, [
    {},
    {},
    priceCol(38500, -100, 34, 'px', { 17: '36886.00|pb' }),
    col(10, '33.3|e1 974|r6 449|p3 97.7|p0 67.4|p0 73.4|p0 42.9|e1'),
    { 17: '-3.45|r4|27|e' },
    { 16: '18.3|g6|81' }
  ]) });
```
